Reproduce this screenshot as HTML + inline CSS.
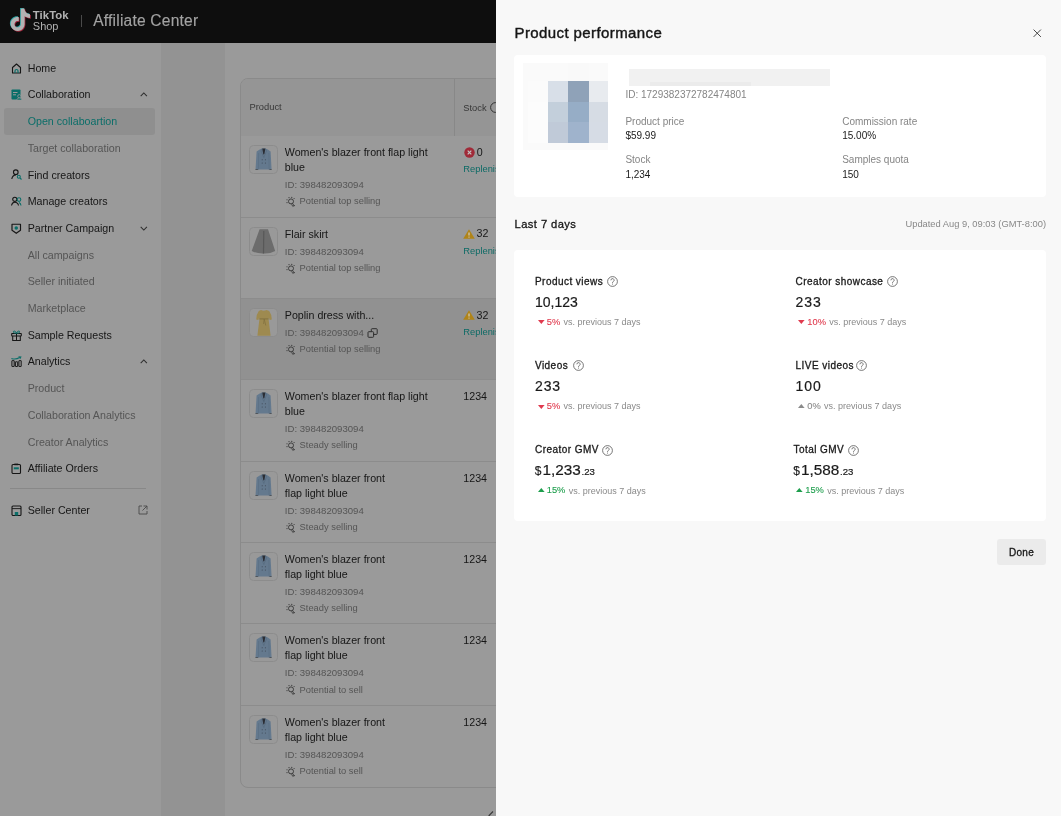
<!DOCTYPE html>
<html><head><meta charset="utf-8"><style>
html,body{margin:0;padding:0}
body{width:1061px;height:816px;overflow:hidden;position:relative;font-family:"Liberation Sans",sans-serif;background:#9a9a9a}
.t{position:absolute;white-space:nowrap}
#wrap{position:absolute;left:0;top:0;width:1061px;height:816px;will-change:transform}
</style></head><body><div id="wrap">
<div style="position:absolute;left:0px;top:0px;width:1061px;height:42.5px;background:#0e0e0e"></div>
<div style="position:absolute;left:0px;top:42.5px;width:161px;height:816px;background:#9a9a9a"></div>
<div style="position:absolute;left:161px;top:42.5px;width:64px;height:816px;background:#939393"></div>
<div style="position:absolute;left:225px;top:42.5px;width:300px;height:816px;background:#9a9a9a"></div>
<svg style="position:absolute;left:8.5px;top:8.3px" width="23" height="25" viewBox="0 0 24 26">
<g transform="translate(0.2,0.6) scale(0.97)">
<path d="M12.525.02c1.31-.02 2.61-.01 3.91-.02.08 1.53.63 3.09 1.75 4.17 1.12 1.11 2.7 1.62 4.24 1.79v4.03c-1.44-.05-2.89-.35-4.2-.97-.57-.26-1.1-.59-1.62-.93-.01 2.92.01 5.84-.02 8.75-.08 1.4-.54 2.79-1.35 3.94-1.31 1.92-3.58 3.17-5.91 3.21-1.43.08-2.86-.31-4.08-1.03-2.02-1.19-3.44-3.37-3.65-5.71-.02-.5-.03-1-.01-1.49.18-1.9 1.12-3.72 2.58-4.96 1.66-1.44 3.98-2.13 6.15-1.72.02 1.48-.04 2.96-.04 4.44-.99-.32-2.15-.23-3.02.37-.63.41-1.11 1.04-1.36 1.75-.21.51-.15 1.07-.14 1.61.24 1.64 1.82 3.02 3.5 2.87 1.12-.01 2.19-.66 2.77-1.61.19-.33.4-.67.41-1.06.1-1.79.06-3.57.07-5.36.01-4.03-.01-8.05.02-12.07z" fill="#2aa3a3" transform="translate(-0.8,-0.8)"/>
<path d="M12.525.02c1.31-.02 2.61-.01 3.91-.02.08 1.53.63 3.09 1.75 4.17 1.12 1.11 2.7 1.62 4.24 1.79v4.03c-1.44-.05-2.89-.35-4.2-.97-.57-.26-1.1-.59-1.62-.93-.01 2.92.01 5.84-.02 8.75-.08 1.4-.54 2.79-1.35 3.94-1.31 1.92-3.58 3.17-5.91 3.21-1.43.08-2.86-.31-4.08-1.03-2.02-1.19-3.44-3.37-3.65-5.71-.02-.5-.03-1-.01-1.49.18-1.9 1.12-3.72 2.58-4.96 1.66-1.44 3.98-2.13 6.15-1.72.02 1.48-.04 2.96-.04 4.44-.99-.32-2.15-.23-3.02.37-.63.41-1.11 1.04-1.36 1.75-.21.51-.15 1.07-.14 1.61.24 1.64 1.82 3.02 3.5 2.87 1.12-.01 2.19-.66 2.77-1.61.19-.33.4-.67.41-1.06.1-1.79.06-3.57.07-5.36.01-4.03-.01-8.05.02-12.07z" fill="#a2263b" transform="translate(0.8,0.8)"/>
<path d="M12.525.02c1.31-.02 2.61-.01 3.91-.02.08 1.53.63 3.09 1.75 4.17 1.12 1.11 2.7 1.62 4.24 1.79v4.03c-1.44-.05-2.89-.35-4.2-.97-.57-.26-1.1-.59-1.62-.93-.01 2.92.01 5.84-.02 8.75-.08 1.4-.54 2.79-1.35 3.94-1.31 1.92-3.58 3.17-5.91 3.21-1.43.08-2.86-.31-4.08-1.03-2.02-1.19-3.44-3.37-3.65-5.71-.02-.5-.03-1-.01-1.49.18-1.9 1.12-3.72 2.58-4.96 1.66-1.44 3.98-2.13 6.15-1.72.02 1.48-.04 2.96-.04 4.44-.99-.32-2.15-.23-3.02.37-.63.41-1.11 1.04-1.36 1.75-.21.51-.15 1.07-.14 1.61.24 1.64 1.82 3.02 3.5 2.87 1.12-.01 2.19-.66 2.77-1.61.19-.33.4-.67.41-1.06.1-1.79.06-3.57.07-5.36.01-4.03-.01-8.05.02-12.07z" fill="#b2b2b2"/>
</g></svg>
<div class="t" style="left:32.8px;top:9.90px;font-size:11.4px;line-height:11.4px;color:#b2b2b2;font-weight:700;letter-spacing:0.05px">TikTok</div>
<div class="t" style="left:32.8px;top:20.70px;font-size:11px;line-height:11px;color:#b2b2b2;font-weight:400;">Shop</div>
<div style="position:absolute;left:80.5px;top:15px;width:1.2px;height:12px;background:#4a4a4a"></div>
<div class="t" style="left:93.2px;top:13.10px;font-size:15.6px;line-height:15.6px;color:#a2a2a2;font-weight:400;letter-spacing:0.2px;-webkit-text-stroke:0.15px #a2a2a2">Affiliate Center</div>
<div style="position:absolute;left:4px;top:108px;width:151px;height:26.5px;background:#8f8f8f;border-radius:3px"></div>
<div class="t" style="left:27.7px;top:62.76px;font-size:10.67px;line-height:10.67px;color:#161616;font-weight:400;">Home</div>
<svg style="position:absolute;left:10.5px;top:62.60px" width="11" height="11" viewBox="0 0 11 11"><path d="M1.5 10 V4.5 L5.5 1 L9.5 4.5 V10 Z" fill="none" stroke="#161616" stroke-width="1.1" stroke-linejoin="round"/><path d="M4 10 V8 a1.5 1.5 0 0 1 3 0 V10" fill="none" stroke="#0b6e69" stroke-width="1.2"/></svg>
<div class="t" style="left:27.7px;top:89.47px;font-size:10.67px;line-height:10.67px;color:#161616;font-weight:400;">Collaboration</div>
<svg style="position:absolute;left:10.5px;top:89.30px" width="11" height="11" viewBox="0 0 11 11"><rect x="0.5" y="0.5" width="9" height="10" rx="0.8" fill="#0b6e69"/><rect x="2" y="3" width="4.5" height="1" fill="#9a9a9a"/><rect x="2" y="5.3" width="3" height="1" fill="#9a9a9a"/><circle cx="8.3" cy="7.2" r="1.6" fill="#0b6e69" stroke="#9a9a9a" stroke-width="0.8"/><path d="M5.8 11 a2.5 2 0 0 1 5 0 Z" fill="#0b6e69" stroke="#9a9a9a" stroke-width="0.6"/></svg>
<div class="t" style="left:27.7px;top:116.16px;font-size:10.67px;line-height:10.67px;color:#0b6e69;font-weight:400;">Open collaboartion</div>
<div class="t" style="left:27.7px;top:142.86px;font-size:10.67px;line-height:10.67px;color:#555555;font-weight:400;">Target collaboration</div>
<div class="t" style="left:27.7px;top:169.56px;font-size:10.67px;line-height:10.67px;color:#161616;font-weight:400;">Find creators</div>
<svg style="position:absolute;left:10.5px;top:169.40px" width="11" height="11" viewBox="0 0 11 11"><circle cx="4.8" cy="3.2" r="2.3" fill="none" stroke="#161616" stroke-width="1.1"/><path d="M0.8 10 C1.3 7 3 6 5 6" fill="none" stroke="#161616" stroke-width="1.1"/><circle cx="7.8" cy="7.8" r="1.5" fill="none" stroke="#0b6e69" stroke-width="1.1"/><path d="M9 9 L10.5 10.5" stroke="#0b6e69" stroke-width="1.1"/></svg>
<div class="t" style="left:27.7px;top:196.26px;font-size:10.67px;line-height:10.67px;color:#161616;font-weight:400;">Manage creators</div>
<svg style="position:absolute;left:10.5px;top:196.10px" width="11" height="11" viewBox="0 0 11 11"><circle cx="3.8" cy="3.3" r="2.1" fill="none" stroke="#161616" stroke-width="1.1"/><path d="M0.5 9.5 C1 7 2.5 6.3 3.8 6.3 C5.3 6.3 7 7 7.5 9.5" fill="none" stroke="#161616" stroke-width="1.1"/><circle cx="8" cy="3.6" r="1.8" fill="none" stroke="#0b6e69" stroke-width="1.1"/><path d="M8 6.5 C9 7 9.8 8 10 9.5" fill="none" stroke="#0b6e69" stroke-width="1.1"/></svg>
<div class="t" style="left:27.7px;top:222.96px;font-size:10.67px;line-height:10.67px;color:#161616;font-weight:400;">Partner Campaign</div>
<svg style="position:absolute;left:10.5px;top:222.80px" width="11" height="11" viewBox="0 0 11 11"><path d="M1 1.2 H9.5 V7.3 L5.25 10.3 L1 7.3 Z" fill="none" stroke="#161616" stroke-width="1.15" stroke-linejoin="round"/><circle cx="5.25" cy="5" r="1.75" fill="#0b6e69"/></svg>
<div class="t" style="left:27.7px;top:249.66px;font-size:10.67px;line-height:10.67px;color:#555555;font-weight:400;">All campaigns</div>
<div class="t" style="left:27.7px;top:276.37px;font-size:10.67px;line-height:10.67px;color:#555555;font-weight:400;">Seller initiated</div>
<div class="t" style="left:27.7px;top:303.06px;font-size:10.67px;line-height:10.67px;color:#555555;font-weight:400;">Marketplace</div>
<div class="t" style="left:27.7px;top:329.77px;font-size:10.67px;line-height:10.67px;color:#161616;font-weight:400;">Sample Requests</div>
<svg style="position:absolute;left:10.5px;top:329.60px" width="11" height="11" viewBox="0 0 11 11"><rect x="0.7" y="3.4" width="9.6" height="2.6" rx="0.4" fill="none" stroke="#161616" stroke-width="1.05"/><path d="M1.7 6 V10.4 H9.3 V6" fill="none" stroke="#161616" stroke-width="1.05"/><path d="M5.5 3.4 V10.4" stroke="#161616" stroke-width="1.05"/><path d="M5.5 3.2 C4.6 0.6 2.2 0.6 2.3 2 C2.4 3 4 3.2 5.5 3.2 C7 3.2 8.6 3 8.7 2 C8.8 0.6 6.4 0.6 5.5 3.2" fill="none" stroke="#0b6e69" stroke-width="1"/></svg>
<div class="t" style="left:27.7px;top:356.46px;font-size:10.67px;line-height:10.67px;color:#161616;font-weight:400;">Analytics</div>
<svg style="position:absolute;left:10.5px;top:356.30px" width="11" height="11" viewBox="0 0 11 11"><rect x="0.9" y="4.6" width="2.3" height="5.9" rx="0.3" fill="none" stroke="#161616" stroke-width="1"/><rect x="4.4" y="5.8" width="2.3" height="4.7" rx="0.3" fill="none" stroke="#161616" stroke-width="1"/><rect x="7.9" y="4.6" width="2.3" height="5.9" rx="0.3" fill="none" stroke="#161616" stroke-width="1"/><path d="M0.4 2.4 C3 3.4 6 3.2 8.6 1.5" fill="none" stroke="#0b6e69" stroke-width="1.05"/><path d="M7.3 0.2 L10.6 0.4 L9.3 3.3 Z" fill="#0b6e69"/></svg>
<div class="t" style="left:27.7px;top:383.17px;font-size:10.67px;line-height:10.67px;color:#555555;font-weight:400;">Product</div>
<div class="t" style="left:27.7px;top:409.86px;font-size:10.67px;line-height:10.67px;color:#555555;font-weight:400;">Collaboration Analytics</div>
<div class="t" style="left:27.7px;top:436.56px;font-size:10.67px;line-height:10.67px;color:#555555;font-weight:400;">Creator Analytics</div>
<div class="t" style="left:27.7px;top:463.27px;font-size:10.67px;line-height:10.67px;color:#161616;font-weight:400;">Affiliate Orders</div>
<svg style="position:absolute;left:10.5px;top:463.10px" width="11" height="11" viewBox="0 0 11 11"><rect x="1" y="1.5" width="8.5" height="9" rx="1" fill="none" stroke="#161616" stroke-width="1.1"/><rect x="3.3" y="0.6" width="3.9" height="1.6" fill="#161616"/><rect x="2.8" y="4.3" width="5" height="2" fill="#0b6e69"/></svg>
<svg style="position:absolute;left:139.8px;top:92.20px" width="8" height="5" viewBox="0 0 8 5"><path d="M0.7 4.1 L3.8 1 L6.9 4.1" fill="none" stroke="#2e2e2e" stroke-width="1.05"/></svg>
<svg style="position:absolute;left:139.8px;top:225.70px" width="8" height="5" viewBox="0 0 8 5"><path d="M0.7 0.9 L3.8 4 L6.9 0.9" fill="none" stroke="#2e2e2e" stroke-width="1.05"/></svg>
<svg style="position:absolute;left:139.8px;top:359.20px" width="8" height="5" viewBox="0 0 8 5"><path d="M0.7 4.1 L3.8 1 L6.9 4.1" fill="none" stroke="#2e2e2e" stroke-width="1.05"/></svg>
<div style="position:absolute;left:10px;top:488px;width:136px;height:0.8px;background:#888888"></div>
<div class="t" style="left:27.7px;top:505.17px;font-size:10.67px;line-height:10.67px;color:#161616;font-weight:400;">Seller Center</div>
<svg style="position:absolute;left:10.5px;top:505.00px" width="11" height="11" viewBox="0 0 11 11"><rect x="1" y="1" width="9" height="9.5" rx="1" fill="none" stroke="#161616" stroke-width="1.1"/><path d="M1 3.6 H10" stroke="#161616" stroke-width="0.9"/><path d="M3.8 10.5 V7 H7.2 V10.5" fill="#0b6e69"/></svg>
<svg style="position:absolute;left:138px;top:505px" width="10" height="10" viewBox="0 0 10 10"><path d="M4 1 H1 V9 H9 V6" fill="none" stroke="#4a4a4a" stroke-width="0.9"/><path d="M5.5 1 H9 V4.5 M9 1 L4.5 5.5" fill="none" stroke="#4a4a4a" stroke-width="0.9"/></svg>
<div style="position:absolute;left:240px;top:78px;width:300px;height:710px;border:1px solid #8a8a8a;border-radius:8px;overflow:hidden;box-sizing:border-box;background:#9a9a9a">
<div style="position:absolute;left:0;top:0;width:300px;height:56.6px;background:#959595"></div>
<div style="position:absolute;left:213px;top:0;width:1px;height:56.6px;background:#888"></div>
</div>
<div class="t" style="left:249.5px;top:103.23px;font-size:9.33px;line-height:9.33px;color:#383838;font-weight:400;">Product</div>
<div class="t" style="left:463.3px;top:103.53px;font-size:9.33px;line-height:9.33px;color:#383838;font-weight:400;">Stock</div>
<svg style="position:absolute;left:489.6px;top:101.8px" width="11" height="11" viewBox="0 0 11 11"><circle cx="5.5" cy="5.5" r="4.9" fill="none" stroke="#333" stroke-width="1"/></svg>
<svg style="position:absolute;left:249.4px;top:145.30px" width="29" height="29" viewBox="0 0 29 29"><rect x="0.5" y="0.5" width="28" height="28" rx="4" fill="#999999" stroke="#8c8c8c"/><path d="M7.6 6.6 L10.7 4.6 L13.1 3.5 H16.4 L18.8 4.6 L21.6 6.6 L22.6 25 H20.4 L20.1 24.6 H9.4 L9.1 25 H6.5 Z" fill="#64798e"/><path d="M9.6 8 L9.4 24.6 M19.9 8 L20.1 24.6" stroke="#566a7e" stroke-width="0.5"/><path d="M13.2 3.6 H16.4 L15.4 8.8 L14.8 9.8 L14.2 8.8 Z" fill="#2b2e35"/><path d="M13.1 3.5 L12 6 L14.8 12.5 M16.4 3.5 L17.5 6 L14.8 12.5" fill="none" stroke="#53667a" stroke-width="0.55"/><g fill="#3b4450"><circle cx="13.2" cy="14.8" r="0.5"/><circle cx="16.4" cy="14.8" r="0.5"/><circle cx="13.2" cy="18" r="0.5"/><circle cx="16.4" cy="18" r="0.5"/></g><path d="M6.5 24.3 H8.9 V25 H6.5 Z M20.5 24.3 H22.6 V25 H20.5 Z" fill="#4a4a4a"/></svg>
<div class="t" style="left:284.8px;top:147.36px;font-size:10.67px;line-height:10.67px;color:#161616;font-weight:400;">Women&#39;s blazer front flap light</div>
<div class="t" style="left:284.8px;top:162.16px;font-size:10.67px;line-height:10.67px;color:#161616;font-weight:400;">blue</div>
<div class="t" style="left:284.8px;top:180.30px;font-size:9.6px;line-height:9.6px;color:#555;font-weight:400;">ID: 398482093094</div>
<svg style="position:absolute;left:285.5px;top:196.10px" width="10" height="12" viewBox="0 0 10 12"><circle cx="5" cy="5.4" r="2.5" fill="none" stroke="#333" stroke-width="0.9"/><path d="M6.5 7.3 L8 9.6 L6.8 10.4 L5.6 8.3" fill="none" stroke="#333" stroke-width="0.8"/><g fill="#333"><circle cx="3" cy="1.6" r="0.55"/><circle cx="5.8" cy="1.4" r="0.55"/><circle cx="8.1" cy="2.5" r="0.55"/><circle cx="1" cy="3.8" r="0.55"/><circle cx="1" cy="6.6" r="0.55"/><circle cx="8.3" cy="9.6" r="0.55"/></g></svg>
<div class="t" style="left:299.6px;top:197.44px;font-size:9.33px;line-height:9.33px;color:#555;font-weight:400;">Potential top selling</div>
<svg style="position:absolute;left:463.5px;top:147.30px" width="11" height="11" viewBox="0 0 11 11"><circle cx="5.5" cy="5.5" r="5.2" fill="#a02a38"/><path d="M3.7 3.7 L7.3 7.3 M7.3 3.7 L3.7 7.3" stroke="#c4c4c4" stroke-width="1.2"/></svg>
<div class="t" style="left:476.8px;top:146.86px;font-size:10.67px;line-height:10.67px;color:#161616;font-weight:400;">0</div>
<div class="t" style="left:463.3px;top:165.34px;font-size:9.33px;line-height:9.33px;color:#0d6b66;font-weight:400;">Replenish</div>
<div style="position:absolute;left:241px;top:216.54999999999998px;width:255px;height:1px;background:#8c8c8c"></div>
<svg style="position:absolute;left:249.4px;top:226.65px" width="29" height="29" viewBox="0 0 29 29"><rect x="0.5" y="0.5" width="28" height="28" rx="4" fill="#999999" stroke="#8c8c8c"/><path d="M10.6 2.3 H19 L26.2 24 Q21 26.8 14.8 26.5 Q8 26.8 2.7 24 Z" fill="#6c6c6c"/><path d="M14.8 4 L14.5 26.5" stroke="#585858" stroke-width="1.2"/></svg>
<div class="t" style="left:284.8px;top:228.71px;font-size:10.67px;line-height:10.67px;color:#161616;font-weight:400;">Flair skirt</div>
<div class="t" style="left:284.8px;top:246.85px;font-size:9.6px;line-height:9.6px;color:#555;font-weight:400;">ID: 398482093094</div>
<svg style="position:absolute;left:285.5px;top:262.65px" width="10" height="12" viewBox="0 0 10 12"><circle cx="5" cy="5.4" r="2.5" fill="none" stroke="#333" stroke-width="0.9"/><path d="M6.5 7.3 L8 9.6 L6.8 10.4 L5.6 8.3" fill="none" stroke="#333" stroke-width="0.8"/><g fill="#333"><circle cx="3" cy="1.6" r="0.55"/><circle cx="5.8" cy="1.4" r="0.55"/><circle cx="8.1" cy="2.5" r="0.55"/><circle cx="1" cy="3.8" r="0.55"/><circle cx="1" cy="6.6" r="0.55"/><circle cx="8.3" cy="9.6" r="0.55"/></g></svg>
<div class="t" style="left:299.6px;top:263.98px;font-size:9.33px;line-height:9.33px;color:#555;font-weight:400;">Potential top selling</div>
<svg style="position:absolute;left:463px;top:228.55px" width="12" height="10" viewBox="0 0 12 10"><path d="M6 0.3 L11.8 9.8 H0.2 Z" fill="#b08418"/><path d="M6 3.5 V6.5 M6 7.6 V8.6" stroke="#ddd" stroke-width="1"/></svg>
<div class="t" style="left:476.5px;top:228.21px;font-size:10.67px;line-height:10.67px;color:#161616;font-weight:400;">32</div>
<div class="t" style="left:463.3px;top:246.68px;font-size:9.33px;line-height:9.33px;color:#0d6b66;font-weight:400;">Replenish</div>
<div style="position:absolute;left:241px;top:298.4px;width:255px;height:81.35px;background:#919191"></div>
<div style="position:absolute;left:241px;top:297.9px;width:255px;height:1px;background:#8c8c8c"></div>
<svg style="position:absolute;left:249.4px;top:308.00px" width="29" height="29" viewBox="0 0 29 29"><rect x="0.5" y="0.5" width="28" height="28" rx="4" fill="#999999" stroke="#8c8c8c"/><path d="M12 2 Q14.8 3.6 17.5 2 L20.2 2.9 Q22.6 6 22.8 11.4 L20.6 11.9 L19.9 9.5 L19.6 11.2 L21.6 27.8 H8.4 L10.4 11.2 L10.1 9.5 L9.4 11.9 L7.2 11.4 Q7.4 6 9.8 2.9 Z" fill="#9e8a50"/><path d="M10.4 10.9 H19.6" stroke="#7f6f3e" stroke-width="0.9"/><path d="M15.2 11 L16.8 17.5 M15.2 11 L14.6 16" stroke="#7f6f3e" stroke-width="0.7"/></svg>
<div class="t" style="left:284.8px;top:310.06px;font-size:10.67px;line-height:10.67px;color:#161616;font-weight:400;">Poplin dress with...</div>
<div class="t" style="left:284.8px;top:328.20px;font-size:9.6px;line-height:9.6px;color:#555;font-weight:400;">ID: 398482093094</div>
<svg style="position:absolute;left:366.5px;top:327.90px" width="11" height="10" viewBox="0 0 11 10"><rect x="1" y="3.7" width="5.6" height="5.6" rx="0.8" fill="none" stroke="#2e2e2e" stroke-width="1"/><path d="M4.3 3.7 V1.5 a0.8 0.8 0 0 1 0.8 -0.8 H9.4 a0.8 0.8 0 0 1 0.8 0.8 V5.6 a0.8 0.8 0 0 1 -0.8 0.8 H6.6" fill="none" stroke="#2e2e2e" stroke-width="1"/></svg>
<svg style="position:absolute;left:285.5px;top:344.00px" width="10" height="12" viewBox="0 0 10 12"><circle cx="5" cy="5.4" r="2.5" fill="none" stroke="#333" stroke-width="0.9"/><path d="M6.5 7.3 L8 9.6 L6.8 10.4 L5.6 8.3" fill="none" stroke="#333" stroke-width="0.8"/><g fill="#333"><circle cx="3" cy="1.6" r="0.55"/><circle cx="5.8" cy="1.4" r="0.55"/><circle cx="8.1" cy="2.5" r="0.55"/><circle cx="1" cy="3.8" r="0.55"/><circle cx="1" cy="6.6" r="0.55"/><circle cx="8.3" cy="9.6" r="0.55"/></g></svg>
<div class="t" style="left:299.6px;top:345.33px;font-size:9.33px;line-height:9.33px;color:#555;font-weight:400;">Potential top selling</div>
<svg style="position:absolute;left:463px;top:309.90px" width="12" height="10" viewBox="0 0 12 10"><path d="M6 0.3 L11.8 9.8 H0.2 Z" fill="#b08418"/><path d="M6 3.5 V6.5 M6 7.6 V8.6" stroke="#ddd" stroke-width="1"/></svg>
<div class="t" style="left:476.5px;top:309.56px;font-size:10.67px;line-height:10.67px;color:#161616;font-weight:400;">32</div>
<div class="t" style="left:463.3px;top:328.03px;font-size:9.33px;line-height:9.33px;color:#0d6b66;font-weight:400;">Replenish</div>
<div style="position:absolute;left:241px;top:379.25px;width:255px;height:1px;background:#8c8c8c"></div>
<svg style="position:absolute;left:249.4px;top:389.35px" width="29" height="29" viewBox="0 0 29 29"><rect x="0.5" y="0.5" width="28" height="28" rx="4" fill="#999999" stroke="#8c8c8c"/><path d="M7.6 6.6 L10.7 4.6 L13.1 3.5 H16.4 L18.8 4.6 L21.6 6.6 L22.6 25 H20.4 L20.1 24.6 H9.4 L9.1 25 H6.5 Z" fill="#64798e"/><path d="M9.6 8 L9.4 24.6 M19.9 8 L20.1 24.6" stroke="#566a7e" stroke-width="0.5"/><path d="M13.2 3.6 H16.4 L15.4 8.8 L14.8 9.8 L14.2 8.8 Z" fill="#2b2e35"/><path d="M13.1 3.5 L12 6 L14.8 12.5 M16.4 3.5 L17.5 6 L14.8 12.5" fill="none" stroke="#53667a" stroke-width="0.55"/><g fill="#3b4450"><circle cx="13.2" cy="14.8" r="0.5"/><circle cx="16.4" cy="14.8" r="0.5"/><circle cx="13.2" cy="18" r="0.5"/><circle cx="16.4" cy="18" r="0.5"/></g><path d="M6.5 24.3 H8.9 V25 H6.5 Z M20.5 24.3 H22.6 V25 H20.5 Z" fill="#4a4a4a"/></svg>
<div class="t" style="left:284.8px;top:391.42px;font-size:10.67px;line-height:10.67px;color:#161616;font-weight:400;">Women&#39;s blazer front flap light</div>
<div class="t" style="left:284.8px;top:406.22px;font-size:10.67px;line-height:10.67px;color:#161616;font-weight:400;">blue</div>
<div class="t" style="left:284.8px;top:424.35px;font-size:9.6px;line-height:9.6px;color:#555;font-weight:400;">ID: 398482093094</div>
<svg style="position:absolute;left:285.5px;top:440.15px" width="10" height="12" viewBox="0 0 10 12"><circle cx="5" cy="5.4" r="2.5" fill="none" stroke="#333" stroke-width="0.9"/><path d="M6.5 7.3 L8 9.6 L6.8 10.4 L5.6 8.3" fill="none" stroke="#333" stroke-width="0.8"/><g fill="#333"><circle cx="3" cy="1.6" r="0.55"/><circle cx="5.8" cy="1.4" r="0.55"/><circle cx="8.1" cy="2.5" r="0.55"/><circle cx="1" cy="3.8" r="0.55"/><circle cx="1" cy="6.6" r="0.55"/><circle cx="8.3" cy="9.6" r="0.55"/></g></svg>
<div class="t" style="left:299.6px;top:441.49px;font-size:9.33px;line-height:9.33px;color:#555;font-weight:400;">Steady selling</div>
<div class="t" style="left:463.3px;top:391.22px;font-size:10.67px;line-height:10.67px;color:#161616;font-weight:400;">1234</div>
<div style="position:absolute;left:241px;top:460.59999999999997px;width:255px;height:1px;background:#8c8c8c"></div>
<svg style="position:absolute;left:249.4px;top:470.70px" width="29" height="29" viewBox="0 0 29 29"><rect x="0.5" y="0.5" width="28" height="28" rx="4" fill="#999999" stroke="#8c8c8c"/><path d="M7.6 6.6 L10.7 4.6 L13.1 3.5 H16.4 L18.8 4.6 L21.6 6.6 L22.6 25 H20.4 L20.1 24.6 H9.4 L9.1 25 H6.5 Z" fill="#64798e"/><path d="M9.6 8 L9.4 24.6 M19.9 8 L20.1 24.6" stroke="#566a7e" stroke-width="0.5"/><path d="M13.2 3.6 H16.4 L15.4 8.8 L14.8 9.8 L14.2 8.8 Z" fill="#2b2e35"/><path d="M13.1 3.5 L12 6 L14.8 12.5 M16.4 3.5 L17.5 6 L14.8 12.5" fill="none" stroke="#53667a" stroke-width="0.55"/><g fill="#3b4450"><circle cx="13.2" cy="14.8" r="0.5"/><circle cx="16.4" cy="14.8" r="0.5"/><circle cx="13.2" cy="18" r="0.5"/><circle cx="16.4" cy="18" r="0.5"/></g><path d="M6.5 24.3 H8.9 V25 H6.5 Z M20.5 24.3 H22.6 V25 H20.5 Z" fill="#4a4a4a"/></svg>
<div class="t" style="left:284.8px;top:472.76px;font-size:10.67px;line-height:10.67px;color:#161616;font-weight:400;">Women&#39;s blazer front</div>
<div class="t" style="left:284.8px;top:487.56px;font-size:10.67px;line-height:10.67px;color:#161616;font-weight:400;">flap light blue</div>
<div class="t" style="left:284.8px;top:505.70px;font-size:9.6px;line-height:9.6px;color:#555;font-weight:400;">ID: 398482093094</div>
<svg style="position:absolute;left:285.5px;top:521.50px" width="10" height="12" viewBox="0 0 10 12"><circle cx="5" cy="5.4" r="2.5" fill="none" stroke="#333" stroke-width="0.9"/><path d="M6.5 7.3 L8 9.6 L6.8 10.4 L5.6 8.3" fill="none" stroke="#333" stroke-width="0.8"/><g fill="#333"><circle cx="3" cy="1.6" r="0.55"/><circle cx="5.8" cy="1.4" r="0.55"/><circle cx="8.1" cy="2.5" r="0.55"/><circle cx="1" cy="3.8" r="0.55"/><circle cx="1" cy="6.6" r="0.55"/><circle cx="8.3" cy="9.6" r="0.55"/></g></svg>
<div class="t" style="left:299.6px;top:522.84px;font-size:9.33px;line-height:9.33px;color:#555;font-weight:400;">Steady selling</div>
<div class="t" style="left:463.3px;top:472.56px;font-size:10.67px;line-height:10.67px;color:#161616;font-weight:400;">1234</div>
<div style="position:absolute;left:241px;top:541.95px;width:255px;height:1px;background:#8c8c8c"></div>
<svg style="position:absolute;left:249.4px;top:552.05px" width="29" height="29" viewBox="0 0 29 29"><rect x="0.5" y="0.5" width="28" height="28" rx="4" fill="#999999" stroke="#8c8c8c"/><path d="M7.6 6.6 L10.7 4.6 L13.1 3.5 H16.4 L18.8 4.6 L21.6 6.6 L22.6 25 H20.4 L20.1 24.6 H9.4 L9.1 25 H6.5 Z" fill="#64798e"/><path d="M9.6 8 L9.4 24.6 M19.9 8 L20.1 24.6" stroke="#566a7e" stroke-width="0.5"/><path d="M13.2 3.6 H16.4 L15.4 8.8 L14.8 9.8 L14.2 8.8 Z" fill="#2b2e35"/><path d="M13.1 3.5 L12 6 L14.8 12.5 M16.4 3.5 L17.5 6 L14.8 12.5" fill="none" stroke="#53667a" stroke-width="0.55"/><g fill="#3b4450"><circle cx="13.2" cy="14.8" r="0.5"/><circle cx="16.4" cy="14.8" r="0.5"/><circle cx="13.2" cy="18" r="0.5"/><circle cx="16.4" cy="18" r="0.5"/></g><path d="M6.5 24.3 H8.9 V25 H6.5 Z M20.5 24.3 H22.6 V25 H20.5 Z" fill="#4a4a4a"/></svg>
<div class="t" style="left:284.8px;top:554.12px;font-size:10.67px;line-height:10.67px;color:#161616;font-weight:400;">Women&#39;s blazer front</div>
<div class="t" style="left:284.8px;top:568.91px;font-size:10.67px;line-height:10.67px;color:#161616;font-weight:400;">flap light blue</div>
<div class="t" style="left:284.8px;top:587.05px;font-size:9.6px;line-height:9.6px;color:#555;font-weight:400;">ID: 398482093094</div>
<svg style="position:absolute;left:285.5px;top:602.85px" width="10" height="12" viewBox="0 0 10 12"><circle cx="5" cy="5.4" r="2.5" fill="none" stroke="#333" stroke-width="0.9"/><path d="M6.5 7.3 L8 9.6 L6.8 10.4 L5.6 8.3" fill="none" stroke="#333" stroke-width="0.8"/><g fill="#333"><circle cx="3" cy="1.6" r="0.55"/><circle cx="5.8" cy="1.4" r="0.55"/><circle cx="8.1" cy="2.5" r="0.55"/><circle cx="1" cy="3.8" r="0.55"/><circle cx="1" cy="6.6" r="0.55"/><circle cx="8.3" cy="9.6" r="0.55"/></g></svg>
<div class="t" style="left:299.6px;top:604.18px;font-size:9.33px;line-height:9.33px;color:#555;font-weight:400;">Steady selling</div>
<div class="t" style="left:463.3px;top:553.91px;font-size:10.67px;line-height:10.67px;color:#161616;font-weight:400;">1234</div>
<div style="position:absolute;left:241px;top:623.3px;width:255px;height:1px;background:#8c8c8c"></div>
<svg style="position:absolute;left:249.4px;top:633.40px" width="29" height="29" viewBox="0 0 29 29"><rect x="0.5" y="0.5" width="28" height="28" rx="4" fill="#999999" stroke="#8c8c8c"/><path d="M7.6 6.6 L10.7 4.6 L13.1 3.5 H16.4 L18.8 4.6 L21.6 6.6 L22.6 25 H20.4 L20.1 24.6 H9.4 L9.1 25 H6.5 Z" fill="#64798e"/><path d="M9.6 8 L9.4 24.6 M19.9 8 L20.1 24.6" stroke="#566a7e" stroke-width="0.5"/><path d="M13.2 3.6 H16.4 L15.4 8.8 L14.8 9.8 L14.2 8.8 Z" fill="#2b2e35"/><path d="M13.1 3.5 L12 6 L14.8 12.5 M16.4 3.5 L17.5 6 L14.8 12.5" fill="none" stroke="#53667a" stroke-width="0.55"/><g fill="#3b4450"><circle cx="13.2" cy="14.8" r="0.5"/><circle cx="16.4" cy="14.8" r="0.5"/><circle cx="13.2" cy="18" r="0.5"/><circle cx="16.4" cy="18" r="0.5"/></g><path d="M6.5 24.3 H8.9 V25 H6.5 Z M20.5 24.3 H22.6 V25 H20.5 Z" fill="#4a4a4a"/></svg>
<div class="t" style="left:284.8px;top:635.46px;font-size:10.67px;line-height:10.67px;color:#161616;font-weight:400;">Women&#39;s blazer front</div>
<div class="t" style="left:284.8px;top:650.26px;font-size:10.67px;line-height:10.67px;color:#161616;font-weight:400;">flap light blue</div>
<div class="t" style="left:284.8px;top:668.40px;font-size:9.6px;line-height:9.6px;color:#555;font-weight:400;">ID: 398482093094</div>
<svg style="position:absolute;left:285.5px;top:684.20px" width="10" height="12" viewBox="0 0 10 12"><circle cx="5" cy="5.4" r="2.5" fill="none" stroke="#333" stroke-width="0.9"/><path d="M6.5 7.3 L8 9.6 L6.8 10.4 L5.6 8.3" fill="none" stroke="#333" stroke-width="0.8"/><g fill="#333"><circle cx="3" cy="1.6" r="0.55"/><circle cx="5.8" cy="1.4" r="0.55"/><circle cx="8.1" cy="2.5" r="0.55"/><circle cx="1" cy="3.8" r="0.55"/><circle cx="1" cy="6.6" r="0.55"/><circle cx="8.3" cy="9.6" r="0.55"/></g></svg>
<div class="t" style="left:299.6px;top:685.53px;font-size:9.33px;line-height:9.33px;color:#555;font-weight:400;">Potential to sell</div>
<div class="t" style="left:463.3px;top:635.26px;font-size:10.67px;line-height:10.67px;color:#161616;font-weight:400;">1234</div>
<div style="position:absolute;left:241px;top:704.6499999999999px;width:255px;height:1px;background:#8c8c8c"></div>
<svg style="position:absolute;left:249.4px;top:714.75px" width="29" height="29" viewBox="0 0 29 29"><rect x="0.5" y="0.5" width="28" height="28" rx="4" fill="#999999" stroke="#8c8c8c"/><path d="M7.6 6.6 L10.7 4.6 L13.1 3.5 H16.4 L18.8 4.6 L21.6 6.6 L22.6 25 H20.4 L20.1 24.6 H9.4 L9.1 25 H6.5 Z" fill="#64798e"/><path d="M9.6 8 L9.4 24.6 M19.9 8 L20.1 24.6" stroke="#566a7e" stroke-width="0.5"/><path d="M13.2 3.6 H16.4 L15.4 8.8 L14.8 9.8 L14.2 8.8 Z" fill="#2b2e35"/><path d="M13.1 3.5 L12 6 L14.8 12.5 M16.4 3.5 L17.5 6 L14.8 12.5" fill="none" stroke="#53667a" stroke-width="0.55"/><g fill="#3b4450"><circle cx="13.2" cy="14.8" r="0.5"/><circle cx="16.4" cy="14.8" r="0.5"/><circle cx="13.2" cy="18" r="0.5"/><circle cx="16.4" cy="18" r="0.5"/></g><path d="M6.5 24.3 H8.9 V25 H6.5 Z M20.5 24.3 H22.6 V25 H20.5 Z" fill="#4a4a4a"/></svg>
<div class="t" style="left:284.8px;top:716.81px;font-size:10.67px;line-height:10.67px;color:#161616;font-weight:400;">Women&#39;s blazer front</div>
<div class="t" style="left:284.8px;top:731.61px;font-size:10.67px;line-height:10.67px;color:#161616;font-weight:400;">flap light blue</div>
<div class="t" style="left:284.8px;top:749.75px;font-size:9.6px;line-height:9.6px;color:#555;font-weight:400;">ID: 398482093094</div>
<svg style="position:absolute;left:285.5px;top:765.55px" width="10" height="12" viewBox="0 0 10 12"><circle cx="5" cy="5.4" r="2.5" fill="none" stroke="#333" stroke-width="0.9"/><path d="M6.5 7.3 L8 9.6 L6.8 10.4 L5.6 8.3" fill="none" stroke="#333" stroke-width="0.8"/><g fill="#333"><circle cx="3" cy="1.6" r="0.55"/><circle cx="5.8" cy="1.4" r="0.55"/><circle cx="8.1" cy="2.5" r="0.55"/><circle cx="1" cy="3.8" r="0.55"/><circle cx="1" cy="6.6" r="0.55"/><circle cx="8.3" cy="9.6" r="0.55"/></g></svg>
<div class="t" style="left:299.6px;top:766.88px;font-size:9.33px;line-height:9.33px;color:#555;font-weight:400;">Potential to sell</div>
<div class="t" style="left:463.3px;top:716.61px;font-size:10.67px;line-height:10.67px;color:#161616;font-weight:400;">1234</div>
<svg style="position:absolute;left:487.5px;top:810.5px" width="6" height="9" viewBox="0 0 6 9"><path d="M5 0.5 L1 4.5 L5 8.5" fill="none" stroke="#3a3a3a" stroke-width="1.1"/></svg>
<div style="position:absolute;left:496px;top:0px;width:565px;height:816px;background:#f8f8f8"></div>
<div class="t" style="left:514.5px;top:25.00px;font-size:15px;line-height:15px;color:#161616;font-weight:400;letter-spacing:0.4px;-webkit-text-stroke:0.4px #161616">Product performance</div>
<svg style="position:absolute;left:1033.3px;top:28.6px" width="8.5" height="8.5" viewBox="0 0 8.5 8.5"><path d="M0.6 0.6 L7.9 7.9 M7.9 0.6 L0.6 7.9" stroke="#333" stroke-width="0.9"/></svg>
<div style="position:absolute;left:514px;top:55px;width:532px;height:141.5px;background:#fff;border-radius:4px"></div>
<div style="position:absolute;left:523px;top:63px;width:5px;height:18.4px;background:#fafafa"></div>
<div style="position:absolute;left:528px;top:63px;width:20.2px;height:18.4px;background:#fafafa"></div>
<div style="position:absolute;left:548.2px;top:63px;width:20.2px;height:18.4px;background:#fafafa"></div>
<div style="position:absolute;left:568.4px;top:63px;width:20.6px;height:18.4px;background:#f9f9f9"></div>
<div style="position:absolute;left:589px;top:63px;width:19px;height:18.4px;background:#fafafa"></div>
<div style="position:absolute;left:523px;top:81.4px;width:5px;height:20.8px;background:#fafafa"></div>
<div style="position:absolute;left:528px;top:81.4px;width:20.2px;height:20.8px;background:#fbfbfb"></div>
<div style="position:absolute;left:548.2px;top:81.4px;width:20.2px;height:20.8px;background:#d8dfe8"></div>
<div style="position:absolute;left:568.4px;top:81.4px;width:20.6px;height:20.8px;background:#8fa2b8"></div>
<div style="position:absolute;left:589px;top:81.4px;width:19px;height:20.8px;background:#e8ebef"></div>
<div style="position:absolute;left:523px;top:102.2px;width:5px;height:20.2px;background:#fafafa"></div>
<div style="position:absolute;left:528px;top:102.2px;width:20.2px;height:20.2px;background:#fcfcfc"></div>
<div style="position:absolute;left:548.2px;top:102.2px;width:20.2px;height:20.2px;background:#c3cfdb"></div>
<div style="position:absolute;left:568.4px;top:102.2px;width:20.6px;height:20.2px;background:#96adc6"></div>
<div style="position:absolute;left:589px;top:102.2px;width:19px;height:20.2px;background:#d6dce4"></div>
<div style="position:absolute;left:523px;top:122.4px;width:5px;height:20.2px;background:#fafafa"></div>
<div style="position:absolute;left:528px;top:122.4px;width:20.2px;height:20.2px;background:#fcfcfc"></div>
<div style="position:absolute;left:548.2px;top:122.4px;width:20.2px;height:20.2px;background:#c0cad8"></div>
<div style="position:absolute;left:568.4px;top:122.4px;width:20.6px;height:20.2px;background:#9fb3cc"></div>
<div style="position:absolute;left:589px;top:122.4px;width:19px;height:20.2px;background:#d6dce5"></div>
<div style="position:absolute;left:523px;top:142.6px;width:5px;height:7.4px;background:#fafafa"></div>
<div style="position:absolute;left:528px;top:142.6px;width:20.2px;height:7.4px;background:#fafafa"></div>
<div style="position:absolute;left:548.2px;top:142.6px;width:20.2px;height:7.4px;background:#fafafa"></div>
<div style="position:absolute;left:568.4px;top:142.6px;width:20.6px;height:7.4px;background:#fafafa"></div>
<div style="position:absolute;left:589px;top:142.6px;width:19px;height:7.4px;background:#fafafa"></div>
<div style="position:absolute;left:629px;top:69px;width:201px;height:16.5px;background:#f1f1f1"></div>
<div style="position:absolute;left:650px;top:82px;width:101px;height:3.5px;background:#ebebeb"></div>
<div class="t" style="left:625.4px;top:89.70px;font-size:10px;line-height:10px;color:#858585;font-weight:400;">ID: 1729382372782474801</div>
<div class="t" style="left:625.4px;top:116.50px;font-size:10px;line-height:10px;color:#858585;font-weight:400;">Product price</div>
<div class="t" style="left:625.4px;top:130.90px;font-size:10px;line-height:10px;color:#1a1a1a;font-weight:400;">$59.99</div>
<div class="t" style="left:625.4px;top:155.30px;font-size:10px;line-height:10px;color:#858585;font-weight:400;">Stock</div>
<div class="t" style="left:625.4px;top:170.00px;font-size:10px;line-height:10px;color:#1a1a1a;font-weight:400;">1,234</div>
<div class="t" style="left:842.2px;top:116.50px;font-size:10px;line-height:10px;color:#858585;font-weight:400;">Commission rate</div>
<div class="t" style="left:842.2px;top:130.70px;font-size:10px;line-height:10px;color:#1a1a1a;font-weight:400;">15.00%</div>
<div class="t" style="left:842.2px;top:155.40px;font-size:10px;line-height:10px;color:#858585;font-weight:400;">Samples quota</div>
<div class="t" style="left:842.2px;top:169.80px;font-size:10px;line-height:10px;color:#1a1a1a;font-weight:400;">150</div>
<div class="t" style="left:514.6px;top:218.50px;font-size:11.2px;line-height:11.2px;color:#161616;font-weight:400;letter-spacing:0.41px;-webkit-text-stroke:0.3px #161616">Last 7 days</div>
<div class="t" style="right:15px;top:219.74px;font-size:9.33px;line-height:9.33px;color:#888888;font-weight:400;">Updated Aug 9, 09:03 (GMT-8:00)</div>
<div style="position:absolute;left:514px;top:250.4px;width:532px;height:270.6px;background:#fff;border-radius:4px"></div>
<div class="t" style="left:535px;top:276.70px;font-size:10px;line-height:10px;color:#1a1a1a;font-weight:400;letter-spacing:0.45px;-webkit-text-stroke:0.3px #1a1a1a">Product views</div>
<svg style="position:absolute;left:607px;top:276.10px" width="11" height="11" viewBox="0 0 11 11"><circle cx="5.5" cy="5.5" r="4.9" fill="none" stroke="#555" stroke-width="0.8"/><path d="M3.9 4.3 a1.6 1.6 0 1 1 2.4 1.3 c-0.6 0.4 -0.8 0.6 -0.8 1.3" fill="none" stroke="#555" stroke-width="0.8"/><circle cx="5.5" cy="8.1" r="0.5" fill="#555"/></svg>
<div class="t" style="left:535px;top:295.00px;font-size:14px;line-height:14px;color:#1a1a1a;font-weight:400;-webkit-text-stroke:0.2px #1a1a1a">10,123</div>
<svg style="position:absolute;left:537.6px;top:320.40px" width="7" height="4" viewBox="0 0 7 4"><path d="M0 0 L3.3 4 L6.6 0 Z" fill="#e03a4e"/></svg>
<div class="t" style="left:546.7px;top:317.63px;font-size:9.33px;line-height:9.33px;color:#e03a4e;font-weight:400;-webkit-text-stroke:0.1px #e03a4e">5%</div>
<div class="t" style="left:563.5px;top:317.80px;font-size:9px;line-height:9px;color:#8a8a8a;font-weight:400;">vs. previous 7 days</div>
<div class="t" style="left:795.6px;top:276.70px;font-size:10px;line-height:10px;color:#1a1a1a;font-weight:400;letter-spacing:0.45px;-webkit-text-stroke:0.3px #1a1a1a">Creator showcase</div>
<svg style="position:absolute;left:887.1px;top:276.10px" width="11" height="11" viewBox="0 0 11 11"><circle cx="5.5" cy="5.5" r="4.9" fill="none" stroke="#555" stroke-width="0.8"/><path d="M3.9 4.3 a1.6 1.6 0 1 1 2.4 1.3 c-0.6 0.4 -0.8 0.6 -0.8 1.3" fill="none" stroke="#555" stroke-width="0.8"/><circle cx="5.5" cy="8.1" r="0.5" fill="#555"/></svg>
<div class="t" style="left:795.6px;top:295.00px;font-size:14px;line-height:14px;color:#1a1a1a;font-weight:400;letter-spacing:0.9px;-webkit-text-stroke:0.2px #1a1a1a">233</div>
<svg style="position:absolute;left:798.2px;top:320.40px" width="7" height="4" viewBox="0 0 7 4"><path d="M0 0 L3.3 4 L6.6 0 Z" fill="#e03a4e"/></svg>
<div class="t" style="left:807.3000000000001px;top:317.63px;font-size:9.33px;line-height:9.33px;color:#e03a4e;font-weight:400;-webkit-text-stroke:0.1px #e03a4e">10%</div>
<div class="t" style="left:829.3000000000001px;top:317.80px;font-size:9px;line-height:9px;color:#8a8a8a;font-weight:400;">vs. previous 7 days</div>
<div class="t" style="left:535px;top:361.05px;font-size:10px;line-height:10px;color:#1a1a1a;font-weight:400;letter-spacing:0.45px;-webkit-text-stroke:0.3px #1a1a1a">Videos</div>
<svg style="position:absolute;left:572.5px;top:360.45px" width="11" height="11" viewBox="0 0 11 11"><circle cx="5.5" cy="5.5" r="4.9" fill="none" stroke="#555" stroke-width="0.8"/><path d="M3.9 4.3 a1.6 1.6 0 1 1 2.4 1.3 c-0.6 0.4 -0.8 0.6 -0.8 1.3" fill="none" stroke="#555" stroke-width="0.8"/><circle cx="5.5" cy="8.1" r="0.5" fill="#555"/></svg>
<div class="t" style="left:535px;top:379.35px;font-size:14px;line-height:14px;color:#1a1a1a;font-weight:400;letter-spacing:0.9px;-webkit-text-stroke:0.2px #1a1a1a">233</div>
<svg style="position:absolute;left:537.6px;top:404.75px" width="7" height="4" viewBox="0 0 7 4"><path d="M0 0 L3.3 4 L6.6 0 Z" fill="#e03a4e"/></svg>
<div class="t" style="left:546.7px;top:401.98px;font-size:9.33px;line-height:9.33px;color:#e03a4e;font-weight:400;-webkit-text-stroke:0.1px #e03a4e">5%</div>
<div class="t" style="left:563.5px;top:402.15px;font-size:9px;line-height:9px;color:#8a8a8a;font-weight:400;">vs. previous 7 days</div>
<div class="t" style="left:795.6px;top:361.05px;font-size:10px;line-height:10px;color:#1a1a1a;font-weight:400;letter-spacing:0.45px;-webkit-text-stroke:0.3px #1a1a1a">LIVE videos</div>
<svg style="position:absolute;left:856.4px;top:360.45px" width="11" height="11" viewBox="0 0 11 11"><circle cx="5.5" cy="5.5" r="4.9" fill="none" stroke="#555" stroke-width="0.8"/><path d="M3.9 4.3 a1.6 1.6 0 1 1 2.4 1.3 c-0.6 0.4 -0.8 0.6 -0.8 1.3" fill="none" stroke="#555" stroke-width="0.8"/><circle cx="5.5" cy="8.1" r="0.5" fill="#555"/></svg>
<div class="t" style="left:795.6px;top:379.35px;font-size:14px;line-height:14px;color:#1a1a1a;font-weight:400;letter-spacing:0.9px;-webkit-text-stroke:0.2px #1a1a1a">100</div>
<svg style="position:absolute;left:798.2px;top:404.05px" width="7" height="4" viewBox="0 0 7 4"><path d="M0 4 L3.3 0 L6.6 4 Z" fill="#8a8a8a"/></svg>
<div class="t" style="left:807.3000000000001px;top:401.98px;font-size:9.33px;line-height:9.33px;color:#8a8a8a;font-weight:400;-webkit-text-stroke:0.1px #8a8a8a">0%</div>
<div class="t" style="left:824.1px;top:402.15px;font-size:9px;line-height:9px;color:#8a8a8a;font-weight:400;">vs. previous 7 days</div>
<div class="t" style="left:535px;top:445.40px;font-size:10px;line-height:10px;color:#1a1a1a;font-weight:400;letter-spacing:0.45px;-webkit-text-stroke:0.3px #1a1a1a">Creator GMV</div>
<svg style="position:absolute;left:601.8px;top:444.80px" width="11" height="11" viewBox="0 0 11 11"><circle cx="5.5" cy="5.5" r="4.9" fill="none" stroke="#555" stroke-width="0.8"/><path d="M3.9 4.3 a1.6 1.6 0 1 1 2.4 1.3 c-0.6 0.4 -0.8 0.6 -0.8 1.3" fill="none" stroke="#555" stroke-width="0.8"/><circle cx="5.5" cy="8.1" r="0.5" fill="#555"/></svg>
<div class="t" style="left:534.7px;top:465.40px;font-size:12px;line-height:12px;color:#1a1a1a;font-weight:400;-webkit-text-stroke:0.15px #1a1a1a">$</div>
<div class="t" style="left:542.6px;top:462.05px;font-size:15.3px;line-height:15.3px;color:#1a1a1a;font-weight:400;-webkit-text-stroke:0.2px #1a1a1a">1,233</div>
<div class="t" style="left:581.6px;top:466.90px;font-size:9.6px;line-height:9.6px;color:#1a1a1a;font-weight:400;-webkit-text-stroke:0.2px #1a1a1a">.23</div>
<svg style="position:absolute;left:537.6px;top:488.40px" width="7" height="4" viewBox="0 0 7 4"><path d="M0 4 L3.3 0 L6.6 4 Z" fill="#1d9e4c"/></svg>
<div class="t" style="left:546.7px;top:486.33px;font-size:9.33px;line-height:9.33px;color:#1d9e4c;font-weight:400;-webkit-text-stroke:0.1px #1d9e4c">15%</div>
<div class="t" style="left:568.7px;top:486.50px;font-size:9px;line-height:9px;color:#8a8a8a;font-weight:400;">vs. previous 7 days</div>
<div class="t" style="left:793.5px;top:445.40px;font-size:10px;line-height:10px;color:#1a1a1a;font-weight:400;letter-spacing:0.45px;-webkit-text-stroke:0.3px #1a1a1a">Total GMV</div>
<svg style="position:absolute;left:848.2px;top:444.80px" width="11" height="11" viewBox="0 0 11 11"><circle cx="5.5" cy="5.5" r="4.9" fill="none" stroke="#555" stroke-width="0.8"/><path d="M3.9 4.3 a1.6 1.6 0 1 1 2.4 1.3 c-0.6 0.4 -0.8 0.6 -0.8 1.3" fill="none" stroke="#555" stroke-width="0.8"/><circle cx="5.5" cy="8.1" r="0.5" fill="#555"/></svg>
<div class="t" style="left:793.2px;top:465.40px;font-size:12px;line-height:12px;color:#1a1a1a;font-weight:400;-webkit-text-stroke:0.15px #1a1a1a">$</div>
<div class="t" style="left:801.1px;top:462.05px;font-size:15.3px;line-height:15.3px;color:#1a1a1a;font-weight:400;-webkit-text-stroke:0.2px #1a1a1a">1,588</div>
<div class="t" style="left:840.1px;top:466.90px;font-size:9.6px;line-height:9.6px;color:#1a1a1a;font-weight:400;-webkit-text-stroke:0.2px #1a1a1a">.23</div>
<svg style="position:absolute;left:796.1px;top:488.40px" width="7" height="4" viewBox="0 0 7 4"><path d="M0 4 L3.3 0 L6.6 4 Z" fill="#1d9e4c"/></svg>
<div class="t" style="left:805.2px;top:486.33px;font-size:9.33px;line-height:9.33px;color:#1d9e4c;font-weight:400;-webkit-text-stroke:0.1px #1d9e4c">15%</div>
<div class="t" style="left:827.2px;top:486.50px;font-size:9px;line-height:9px;color:#8a8a8a;font-weight:400;">vs. previous 7 days</div>
<div style="position:absolute;left:997.2px;top:539.1px;width:48.6px;height:26.3px;background:#ebebeb;border-radius:3px"></div>
<div class="t" style="left:1008.9px;top:548.10px;font-size:10px;line-height:10px;color:#161616;font-weight:400;letter-spacing:0.35px;-webkit-text-stroke:0.3px #161616">Done</div>
</div></body></html>
